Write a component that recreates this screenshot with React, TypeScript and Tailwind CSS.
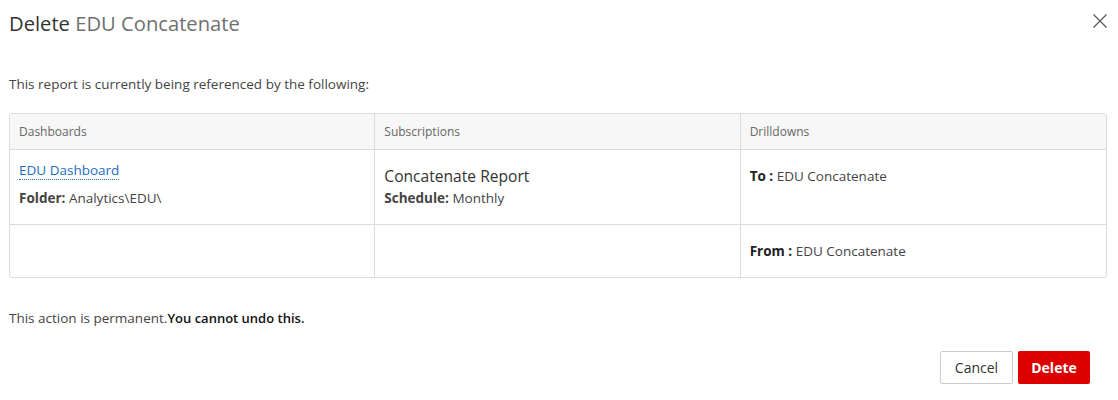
export default function App() {
  return (
    <div className="w-[1118px] h-[400px] bg-white text-[#333] font-['Open_Sans',sans-serif] relative">
      <div className="flex items-center justify-between pl-[9px] pr-[11px] pt-[9px]">
        <h1 className="text-[20.2px] leading-[28px] font-normal">
          Delete <span className="text-[#707070]">EDU Concatenate</span>
        </h1>
        <button className="w-[14px] h-[14px] mt-[-4px]" aria-label="Close">
          <svg viewBox="0 0 14 14" className="w-[14px] h-[14px]" stroke="#555" strokeWidth="1.2" fill="none">
            <path d="M0.5 0.5 L13.5 13.5 M13.5 0.5 L0.5 13.5" />
          </svg>
        </button>
      </div>

      <p className="mt-[37px] pl-[9px] text-[13.5px] leading-[20px] text-[#444]">
        This report is currently being referenced by the following:
      </p>

      <div className="mt-[19px] ml-[9px] mr-[11px] border border-[#dcdcdc] rounded-[3px] overflow-hidden text-[13.5px]">
        <div className="grid grid-cols-3 bg-[#f7f7f7] border-b border-[#dcdcdc] text-[12px] text-[#666]">
          <div className="h-[35px] flex items-center px-[9px] border-r border-[#dcdcdc]">Dashboards</div>
          <div className="h-[35px] flex items-center px-[9px] border-r border-[#dcdcdc]">Subscriptions</div>
          <div className="h-[35px] flex items-center px-[9px]">Drilldowns</div>
        </div>
        <div className="grid grid-cols-3 border-b border-[#dcdcdc]">
          <div className="h-[74px] px-[9px] pt-[10px] border-r border-[#dcdcdc]">
            <div className="leading-[20px]">
              <a className="text-[#1b6ec2] border-b border-dotted border-[#1b6ec2] cursor-pointer">EDU Dashboard</a>
            </div>
            <div className="mt-[8px] leading-[20px] text-[#444]">
              <span className="font-bold">Folder:</span> Analytics\EDU\
            </div>
          </div>
          <div className="h-[74px] px-[9px] pt-[14px] border-r border-[#dcdcdc]">
            <div className="text-[15.6px] leading-[24px]">Concatenate Report</div>
            <div className="leading-[20px] text-[#444]">
              <span className="font-bold">Schedule:</span> Monthly
            </div>
          </div>
          <div className="h-[74px] px-[9px] pt-[16px]">
            <div className="leading-[20px] text-[#444]">
              <span className="font-bold text-[#222]">To :</span> EDU Concatenate
            </div>
          </div>
        </div>
        <div className="grid grid-cols-3">
          <div className="h-[52px] border-r border-[#dcdcdc]" />
          <div className="h-[52px] border-r border-[#dcdcdc]" />
          <div className="h-[52px] px-[9px] flex items-center leading-[20px] text-[#444]">
            <span>
              <span className="font-bold text-[#222]">From :</span> EDU Concatenate
            </span>
          </div>
        </div>
      </div>

      <p className="mt-[30px] pl-[9px] text-[13.5px] leading-[20px] text-[#444]">
        This action is permanent.<span className="text-[13px] font-semibold text-[#111]">You cannot undo this.</span>
      </p>

      <div className="mt-[23px] pr-[28px] flex justify-end gap-[5px]">
        <button className="w-[73px] h-[33px] border border-[#ccc] rounded-[2px] bg-white text-[14px] text-[#333]">
          Cancel
        </button>
        <button className="w-[72px] h-[33px] rounded-[2px] bg-[#dc0000] text-[14px] font-bold text-white">
          Delete
        </button>
      </div>
    </div>
  );
}
